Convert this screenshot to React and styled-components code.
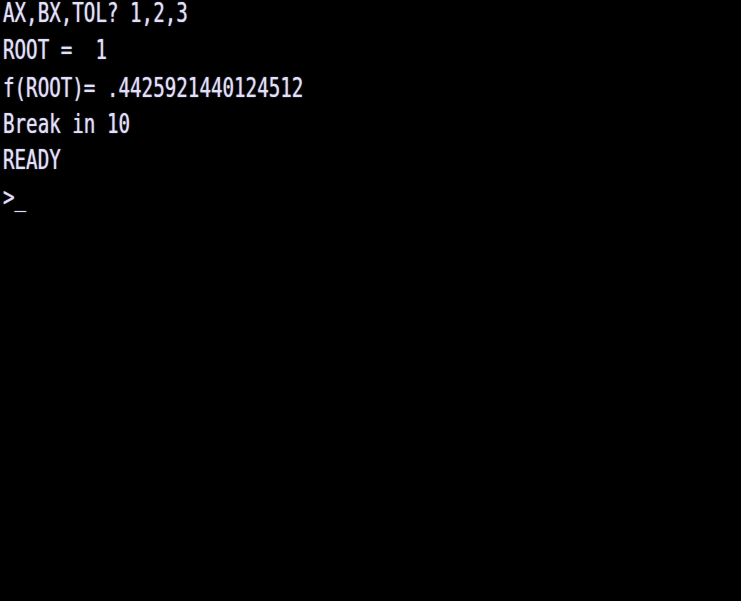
import React from "react";
import styled, { createGlobalStyle } from "styled-components";

const Global = createGlobalStyle`
  html, body {
    margin: 0;
    padding: 0;
    background: #000;
    height: 100%;
    overflow: hidden;
  }
  #root { height: 100%; }
`;

const Screen = styled.main`
  width: 741px;
  height: 601px;
  background: #000;
  overflow: hidden;
`;

const Console = styled.div`
  padding-left: 3px;
  transform: scaleY(1.4);
  transform-origin: top left;
  font-family: "DejaVu Sans Mono", "Liberation Mono", monospace;
  font-size: 19.2px;
  color: #e2e0fa;
  text-shadow: 0 0 1px rgba(220, 218, 255, 0.7);
`;

const Line = styled.div`
  height: 26.3px;
  line-height: 19px;
  white-space: pre;
`;

const lines = [
  "AX,BX,TOL? 1,2,3",
  "ROOT =  1",
  "f(ROOT)= .4425921440124512",
  "Break in 10",
  "READY",
  ">_",
];

export default function App() {
  return (
    <Screen>
      <Global />
      <Console>
        {lines.map((l, i) => (
          <Line key={i}>{l}</Line>
        ))}
      </Console>
    </Screen>
  );
}
